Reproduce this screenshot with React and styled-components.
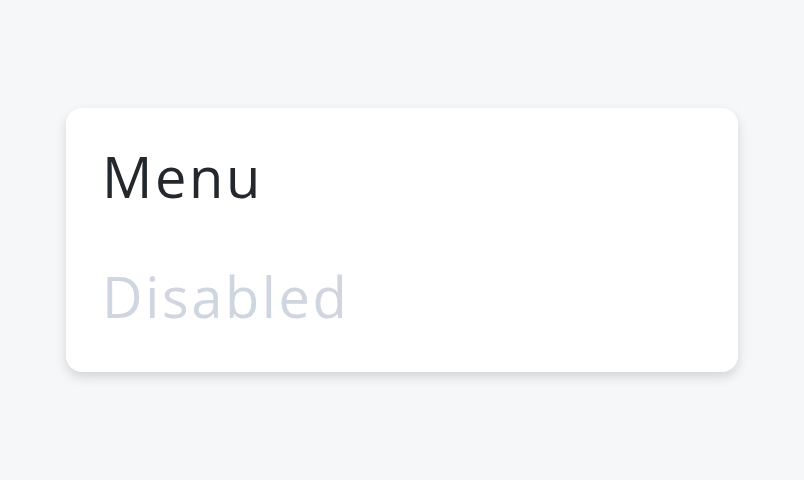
import React from "react";
import styled, { createGlobalStyle } from "styled-components";

const Global = createGlobalStyle`
  html, body { margin: 0; padding: 0; background: #f6f7f9; }
  body { font-family: "Open Sans", "Noto Sans", sans-serif; }
`;

const Page = styled.div`
  width: 804px;
  height: 480px;
  display: flex;
  align-items: center;
  justify-content: center;
`;

const Card = styled.div`
  width: 672px;
  box-sizing: border-box;
  padding: 8px 0 16px;
  background: #ffffff;
  border-radius: 16px;
  box-shadow: 0 5px 12px rgba(0, 0, 0, 0.14);
  display: flex;
  flex-direction: column;
`;

const Item = styled.div`
  height: 120px;
  display: flex;
  align-items: center;
  padding: 0 36px;
  font-size: 56px;
  font-weight: 400;
  letter-spacing: 2.6px;
  color: ${(p) => (p.disabled ? "#cfd6e0" : "#23282d")};
`;

export default function App() {
  return (
    <>
      <Global />
      <Page>
        <Card>
          <Item>Menu</Item>
          <Item disabled>Disabled</Item>
        </Card>
      </Page>
    </>
  );
}
